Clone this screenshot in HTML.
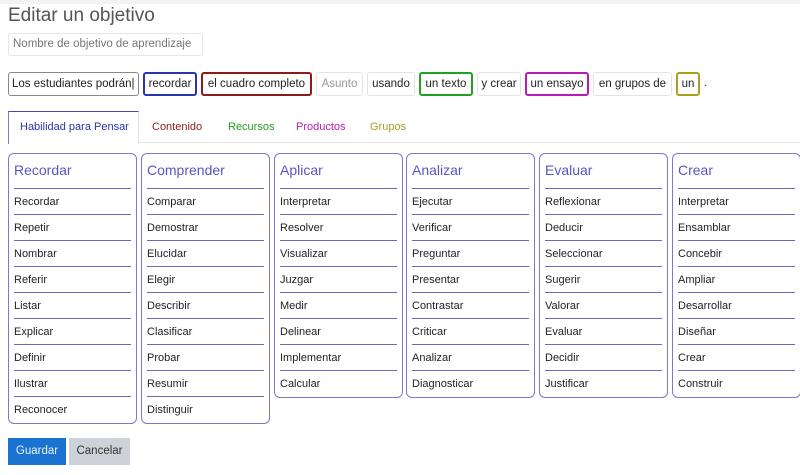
<!DOCTYPE html><html><head><style>
body{margin:0;width:800px;height:475px;overflow:hidden;background:#fff;font-family:"Liberation Sans",sans-serif;color:#222;position:relative}
.a{position:absolute;box-sizing:border-box;white-space:nowrap}
.chip{position:absolute;top:72px;height:24px;border:1px solid #e4e4e4;border-radius:3px;font-size:11.5px;line-height:22px;padding:0 3px;white-space:nowrap;box-sizing:border-box;overflow:hidden;text-align:center}
.col{position:absolute;top:153px;width:129px;border:1px solid #7b78cf;border-radius:6px;box-sizing:border-box;padding:0 5px}
.col h3{margin:0;font-weight:normal;color:#5b55c4;font-size:14px;height:34px;line-height:32px;border-bottom:1px solid #6b68c4}
.col div{font-size:11px;height:25px;line-height:26px;border-bottom:1px solid #6b68c4}
.col div:last-child{border-bottom:none;height:26px}
.tab{position:absolute;top:112px;font-size:11px;line-height:30px;white-space:nowrap}
</style></head><body>
<div class="a" style="left:0;top:0;width:800px;height:4px;background:#f3f3f3"></div>
<div class="a" style="left:8px;top:5px;font-size:19px;color:#555">Editar un objetivo</div>
<div class="a" style="left:8px;top:33px;width:195px;height:23px;border:1px solid #e6e6e6;border-radius:3px;font-size:11.5px;color:#777;padding-left:4px;line-height:21px;overflow:hidden">Nombre de objetivo de aprendizaje</div>
<div class="chip" style="left:8px;width:131px;border-color:#888;text-align:left">Los estudiantes podrán|</div>
<div class="chip" style="left:143px;width:54px;border:2px solid #2b33b5;line-height:20px">recordar</div>
<div class="chip" style="left:201px;width:111px;border:2px solid #8a1c1c;line-height:20px">el cuadro completo</div>
<div class="chip" style="left:316px;width:47px;color:#999">Asunto</div>
<div class="chip" style="left:367px;width:48px">usando</div>
<div class="chip" style="left:419px;width:54px;border:2px solid #22a022;line-height:20px">un texto</div>
<div class="chip" style="left:477px;width:44px">y crear</div>
<div class="chip" style="left:525px;width:64px;border:2px solid #b51cb5;line-height:20px">un ensayo</div>
<div class="chip" style="left:593px;width:79px">en grupos de</div>
<div class="chip" style="left:676px;width:24px;border:2px solid #a8a020;line-height:20px;padding:0">un</div>
<div class="a" style="left:704px;top:75px;font-size:12px">.</div>
<div class="a" style="left:8px;top:142px;width:792px;height:1px;background:#e4e4e4"></div>
<div class="a" style="left:8px;top:111px;width:131px;height:33px;border:1px solid #e0e0e0;border-top:1px solid #4a48b8;border-left:1px solid #7b78cf;border-bottom:none;background:#fff"></div>
<div class="tab" style="left:20px;color:#2b33a5">Habilidad para Pensar</div>
<div class="tab" style="left:152px;color:#8a1c1c">Contenido</div>
<div class="tab" style="left:228px;color:#22a022">Recursos</div>
<div class="tab" style="left:296px;color:#b51cb5">Productos</div>
<div class="tab" style="left:370px;color:#a8a020">Grupos</div>
<div class="col" style="left:8px"><h3>Recordar</h3><div>Recordar</div><div>Repetir</div><div>Nombrar</div><div>Referir</div><div>Listar</div><div>Explicar</div><div>Definir</div><div>Ilustrar</div><div>Reconocer</div></div>
<div class="col" style="left:141px"><h3>Comprender</h3><div>Comparar</div><div>Demostrar</div><div>Elucidar</div><div>Elegir</div><div>Describir</div><div>Clasificar</div><div>Probar</div><div>Resumir</div><div>Distinguir</div></div>
<div class="col" style="left:274px"><h3>Aplicar</h3><div>Interpretar</div><div>Resolver</div><div>Visualizar</div><div>Juzgar</div><div>Medir</div><div>Delinear</div><div>Implementar</div><div>Calcular</div></div>
<div class="col" style="left:406px"><h3>Analizar</h3><div>Ejecutar</div><div>Verificar</div><div>Preguntar</div><div>Presentar</div><div>Contrastar</div><div>Criticar</div><div>Analizar</div><div>Diagnosticar</div></div>
<div class="col" style="left:539px"><h3>Evaluar</h3><div>Reflexionar</div><div>Deducir</div><div>Seleccionar</div><div>Sugerir</div><div>Valorar</div><div>Evaluar</div><div>Decidir</div><div>Justificar</div></div>
<div class="col" style="left:672px"><h3>Crear</h3><div>Interpretar</div><div>Ensamblar</div><div>Concebir</div><div>Ampliar</div><div>Desarrollar</div><div>Diseñar</div><div>Crear</div><div>Construir</div></div>
<div class="a" style="left:8px;top:438px;width:58px;height:27px;background:#1a73d0;color:#e8f0ff;font-size:11.5px;line-height:27px;text-align:center">Guardar</div>
<div class="a" style="left:69px;top:438px;width:61px;height:27px;background:#cdd2d8;color:#333;font-size:11.5px;line-height:27px;text-align:center">Cancelar</div>
</body></html>
